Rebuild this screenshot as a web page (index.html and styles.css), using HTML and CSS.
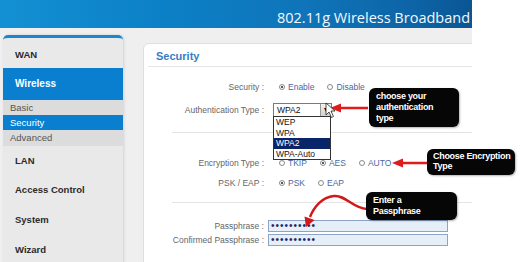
FILE: index.html
```html
<!DOCTYPE html>
<html lang="en">
<head>
    <meta charset="UTF-8">
    <title>802.11g Wireless Broadband - Security</title>
    <link rel="stylesheet" href="styles.css">
</head>
<body>
    <div class="screen">
        <div class="topbar">802.11g Wireless Broadband</div>

        <div class="layout">
            <nav class="sidebar">
                <div class="menu-item">WAN</div>
                <div class="menu-item active">Wireless</div>
                <div class="submenu">
                    <div class="sub-item">Basic</div>
                    <div class="sub-item active">Security</div>
                    <div class="sub-item">Advanced</div>
                </div>
                <div class="menu-item lan">LAN</div>
                <div class="menu-item">Access Control</div>
                <div class="menu-item">System</div>
                <div class="menu-item">Wizard</div>
            </nav>

            <main class="panel">
                <h2 class="panel-title">Security</h2>

                <div class="form-row first">
                    <span class="label">Security :</span>
                    <div class="options">
                        <span class="radio checked"></span><span class="opt">Enable</span>
                        <span class="radio"></span><span class="opt">Disable</span>
                    </div>
                </div>

                <div class="form-row auth">
                    <span class="label">Authentication Type :</span>
                    <div class="select">
                        <span class="select-value">WPA2</span>
                        <span class="select-btn">&#9662;</span>
                    </div>
                </div>

                <div class="divider"></div>

                <div class="form-row enc">
                    <span class="label">Encryption Type :</span>
                    <div class="options">
                        <span class="radio"></span><span class="opt">TKIP</span>
                        <span class="radio checked"></span><span class="opt">AES</span>
                        <span class="radio"></span><span class="opt">AUTO</span>
                    </div>
                </div>

                <div class="form-row">
                    <span class="label">PSK / EAP :</span>
                    <div class="options">
                        <span class="radio checked"></span><span class="opt">PSK</span>
                        <span class="radio"></span><span class="opt">EAP</span>
                    </div>
                </div>

                <div class="divider"></div>

                <div class="form-row pass first-pass">
                    <span class="label">Passphrase :</span>
                    <div class="pass-input">••••••••••</div>
                </div>
                <div class="form-row pass">
                    <span class="label">Confirmed Passphrase :</span>
                    <div class="pass-input">••••••••••</div>
                </div>
            </main>
        </div>
    </div>

    <!-- open dropdown list -->
    <ul class="dropdown">
        <li>WEP</li>
        <li>WPA</li>
        <li class="selected">WPA2</li>
        <li>WPA-Auto</li>
    </ul>

    <!-- annotations -->
    <svg class="annotations" width="520" height="262" viewBox="0 0 520 262">
        <line x1="368" y1="108" x2="339" y2="108" stroke="#e01b1b" stroke-width="2.5"/>
        <polygon points="330,108 341,103.5 341,112.5" fill="#e01b1b"/>

        <line x1="428" y1="163" x2="401" y2="163" stroke="#e01b1b" stroke-width="2.5"/>
        <polygon points="392,163 403,158.5 403,167.5" fill="#e01b1b"/>

        <path d="M 367 209 C 352 208, 346 195, 334 196 C 322 197, 314 207, 310 217" fill="none" stroke="#d21818" stroke-width="2.5"/>
        <polygon points="306,227 304.5,216.5 314.5,220" fill="#d21818"/>

        <polygon points="326,103 326,115 329,112 331.5,117.5 333.5,116.5 331,111 335,111" fill="#fff" stroke="#222" stroke-width="0.8"/>
    </svg>

    <div class="callout c1">choose your<br>authentication<br>type</div>
    <div class="callout c2">Choose Encryption<br>Type</div>
    <div class="callout c3">Enter a<br>Passphrase</div>
</body>
</html>
```

FILE: styles.css
```css
* {
    margin: 0;
    padding: 0;
    box-sizing: border-box;
}

body {
    width: 520px;
    height: 262px;
    overflow: hidden;
    background: #fff;
    position: relative;
    font-family: 'Liberation Sans', Arial, sans-serif;
}

.screen {
    width: 472px;
    height: 262px;
    background: #efefef;
    overflow: hidden;
}

.topbar {
    height: 28px;
    background: linear-gradient(to right, #1390d3 0%, #0c80c6 35%, #0f74b9 65%, #0d64a6 88%, #0a5593 100%);
    color: #f4f8fc;
    font-family: 'Open Sans', sans-serif;
    font-size: 14.5px;
    line-height: 28px;
    text-align: right;
    padding: 4px 2px 0 0;
    white-space: nowrap;
}

.layout {
    display: flex;
    align-items: flex-start;
    padding-top: 7px;
}

/* left menu */
.sidebar {
    width: 120px;
    height: 240px;
    margin-left: 3px;
    background: #e9e9e9;
    border-top: 3px solid #1a88d0;
    border-radius: 5px 5px 0 0;
    box-shadow: 1px 0 3px rgba(0,0,0,0.12);
}

.menu-item {
    height: 30px;
    line-height: 30px;
    padding-left: 12px;
    font-size: 9.5px;
    font-weight: 700;
    color: #2b2b2b;
}

.menu-item:first-child {
    height: 30px;
    line-height: 34px;
}

.menu-item.active {
    height: 32px;
    line-height: 32px;
    background: #0a7fcf;
    color: #fff;
    font-size: 10px;
}

.menu-item.lan {
    height: 29px;
    line-height: 29px;
}

.submenu {
    background: #dcdcdc;
    padding-bottom: 1px;
}

.sub-item {
    height: 15px;
    line-height: 15px;
    padding-left: 7px;
    font-size: 9.5px;
    color: #555;
}

.sub-item.active {
    background: #0a7fcf;
    color: #fff;
}

/* main panel */
.panel {
    flex: 1;
    height: 230px;
    margin: 8px -12px 0 20px;
    background: #fff;
    border: 1px solid #dedede;
    border-radius: 6px;
}

.panel-title {
    margin: 0 4px;
    height: 23px;
    padding: 6px 0 0 8px;
    font-size: 11px;
    font-weight: 700;
    color: #3a7cc2;
    border-bottom: 1px solid #e6e6e6;
}

.form-row {
    display: flex;
    align-items: center;
    height: 20px;
    font-size: 8.5px;
}

.form-row.first {
    margin-top: 10px;
}

.form-row.auth {
    height: 26px;
}

.form-row.enc {
    margin-top: 20px;
}

.form-row.pass {
    height: 14px;
}

.form-row.first-pass {
    margin-top: 16px;
}

.label {
    width: 120px;
    text-align: right;
    color: #666;
}

.divider {
    height: 1px;
    margin: 9px 0 0 28px;
    background: #e4e4e4;
}

.options {
    display: flex;
    align-items: center;
    margin-left: 15px;
}

.radio {
    width: 6px;
    height: 6px;
    border-radius: 50%;
    border: 1px solid #8a8a8a;
    background: #fff;
    margin-right: 3px;
    position: relative;
}

.radio.checked::after {
    content: "";
    position: absolute;
    left: 1px;
    top: 1px;
    width: 2px;
    height: 2px;
    border-radius: 50%;
    background: #222;
}

.opt {
    color: #4a68a3;
    margin-right: 13px;
}

.select {
    display: flex;
    align-items: center;
    width: 59px;
    height: 14px;
    margin-left: 9px;
    border: 1px solid #7a7a7a;
    background: #fff;
}

.select-value {
    flex: 1;
    padding-left: 3px;
    color: #111;
    font-size: 8.5px;
}

.select-btn {
    width: 11px;
    height: 12px;
    line-height: 12px;
    text-align: center;
    font-size: 8px;
    color: #111;
    background: linear-gradient(#f4f4f4, #cfcfcf);
    border-left: 1px solid #999;
}

.pass-input {
    width: 180px;
    height: 12px;
    margin-left: 4px;
    padding-left: 2px;
    background: #e6eef8;
    border: 1px solid #8ca5c6;
    color: #1b2a6b;
    font-size: 10px;
    line-height: 10px;
    letter-spacing: 1px;
}

/* open select list, drawn over the form */
.dropdown {
    position: absolute;
    left: 273px;
    top: 116px;
    width: 58px;
    list-style: none;
    background: #fff;
    border: 1px solid #333;
    font-size: 8.5px;
    color: #111;
}

.dropdown li {
    height: 10.5px;
    line-height: 10.5px;
    padding-left: 2px;
}

.dropdown li.selected {
    background: #0a246a;
    color: #fff;
}

/* annotation layer */
.annotations {
    position: absolute;
    left: 0;
    top: 0;
}

.callout {
    position: absolute;
    background: #060606;
    color: #fff;
    border-radius: 6px;
    font-size: 9px;
    font-weight: 700;
    letter-spacing: -0.3px;
    line-height: 11px;
    padding: 3px 0 0 7px;
    white-space: nowrap;
    box-shadow: 1px 1px 2px rgba(0,0,0,0.3);
}

.c1 {
    left: 369px;
    top: 88px;
    width: 90px;
    height: 39px;
}

.c2 {
    left: 427px;
    top: 149px;
    width: 88px;
    height: 26px;
    line-height: 10px;
    padding-top: 2px;
    padding-left: 6px;
}

.c3 {
    left: 366px;
    top: 192px;
    width: 91px;
    height: 28px;
}
```
